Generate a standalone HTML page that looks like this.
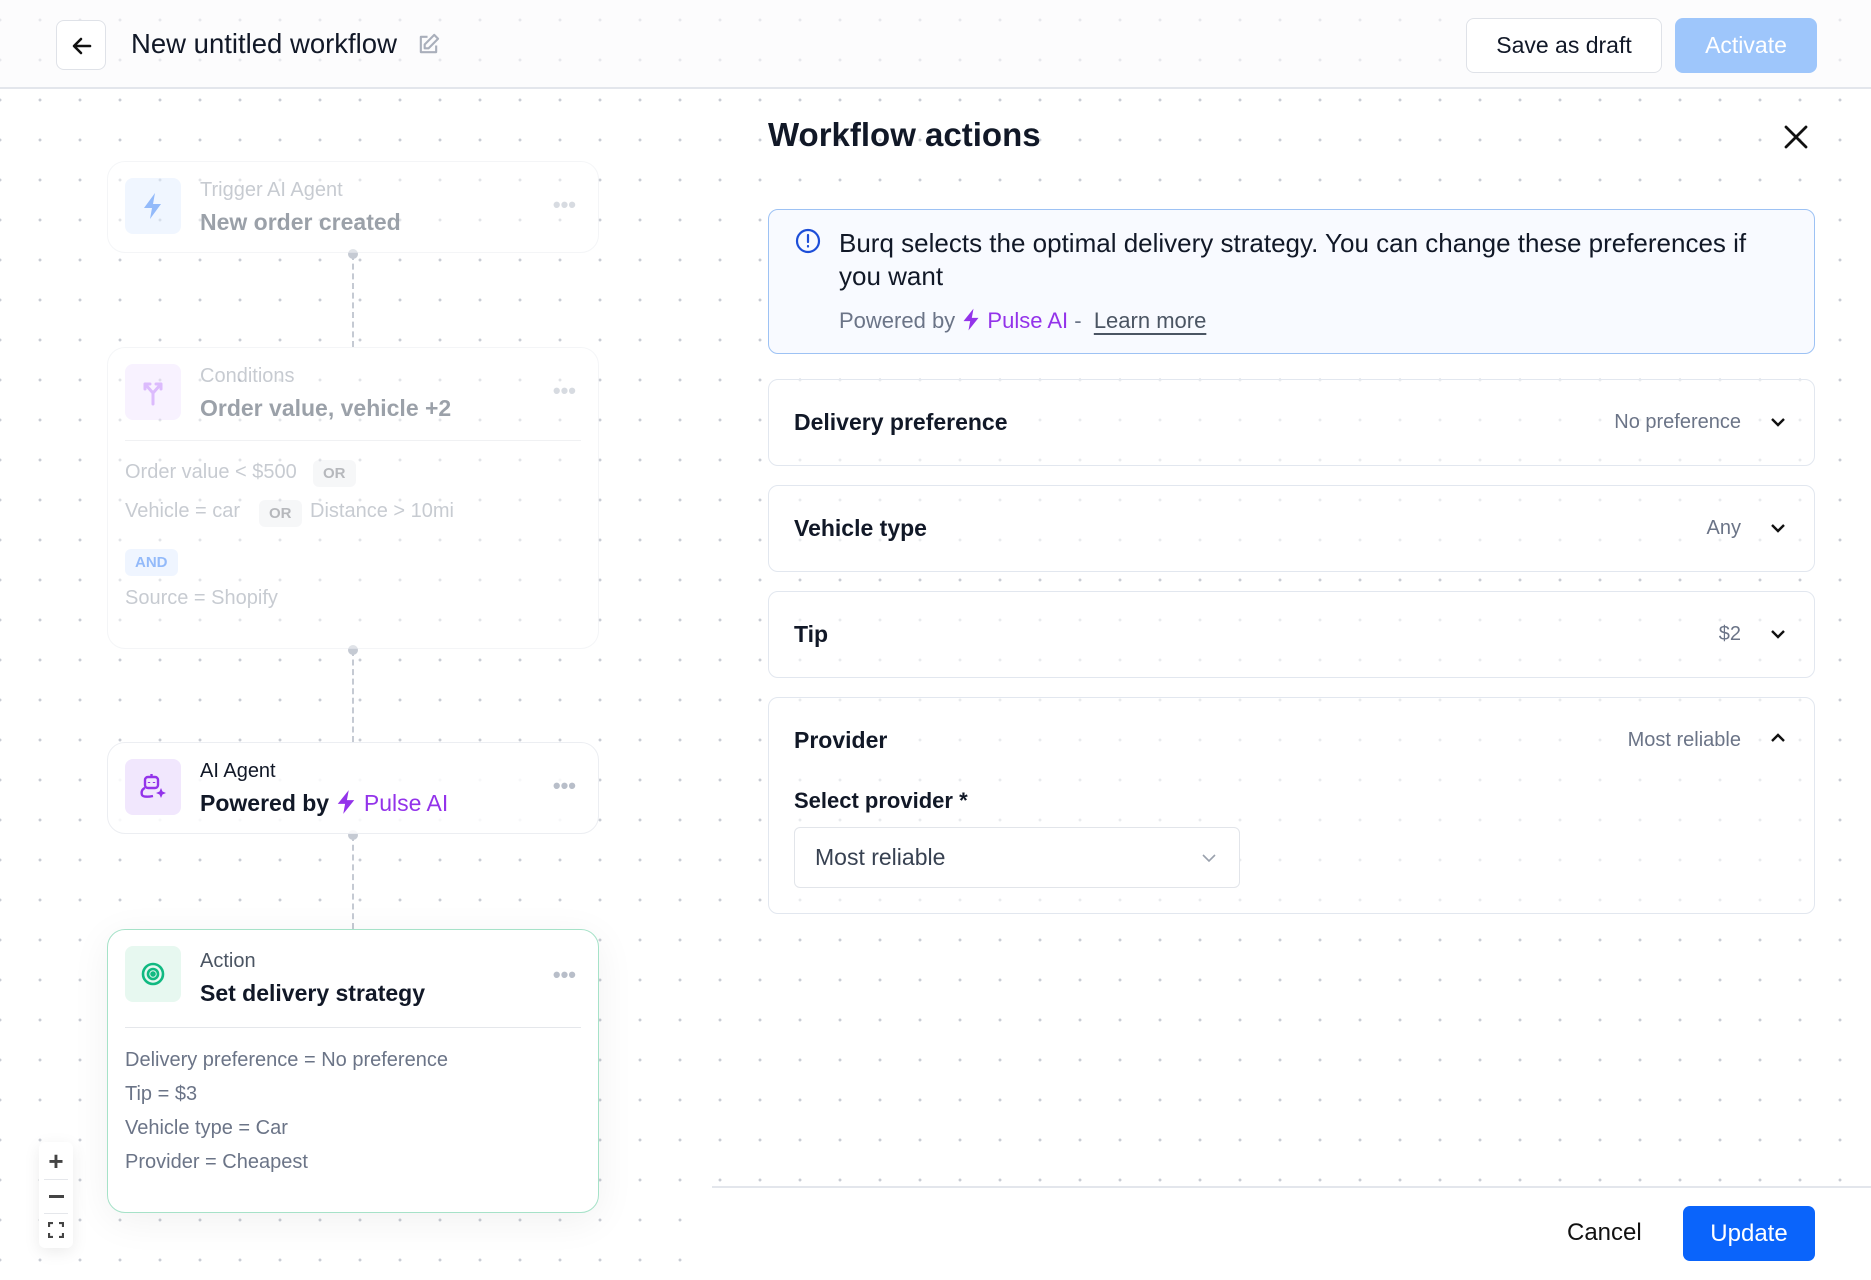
<!DOCTYPE html>
<html><head><meta charset="utf-8"><style>
*{box-sizing:border-box;margin:0;padding:0}
body{width:1871px;height:1280px;position:relative;overflow:hidden;font-family:"Liberation Sans",sans-serif;color:#111827;background:#fff;
background-image:radial-gradient(circle,#c8ccd4 1.3px,transparent 1.6px);background-size:40px 40px;background-position:20px 0px}
.a{position:absolute}
.hdr{left:0;top:0;width:1871px;height:89px;border-bottom:2px solid #e3e6ec;background:rgba(250,250,251,.6)}
.btn{border:1.5px solid #dfe2e8;border-radius:8px;background:#fff}
.card{background:rgba(255,255,255,.85);border:1.5px solid #eceef2;border-radius:18px;left:107px;width:492px}
.ib{left:17px;width:56px;height:56px;border-radius:8px}
.sm{font-size:20px;color:#9aa1ad}
.bd{font-size:23px;font-weight:bold}
.dots{right:22px;color:#b8bec9;font-size:22px;letter-spacing:0px;font-weight:bold}
.line{font-size:20px;color:#6b7487;left:17px}
.conn{left:352px;width:0;border-left:2px dashed #c5cad3}
.row{left:768px;width:1047px;border:1.5px solid #e2e7ef;border-radius:10px;background:rgba(255,255,255,.6)}
.rl{left:25px;font-size:23px;font-weight:bold;color:#111827}
.rv{font-size:20px;color:#6b7487}
.pill{border-radius:6px;font-size:15px;font-weight:bold;padding:5px 10px;background:#f0f1f4;color:#7b7f86}
</style></head><body>
<div class="a hdr"></div>
<div class="a btn" style="left:56px;top:20px;width:50px;height:50px">
<svg class="a" style="left:13px;top:13px" width="24" height="24" viewBox="0 0 24 24" fill="none" stroke="#111" stroke-width="2.6" stroke-linecap="round" stroke-linejoin="round"><path d="M20 12H5M11 5l-7 7 7 7"/></svg></div>
<div class="a" style="left:131px;top:28px;font-size:27.5px">New untitled workflow</div>
<svg class="a" style="left:417px;top:33px" width="23" height="23" viewBox="0 0 24 24" fill="none" stroke="#a9afbb" stroke-width="2.2" stroke-linejoin="round"><path d="M11 4H4v16h16v-7"/><path d="M18 2l4 4-10 10H8v-4z"/></svg>
<div class="a btn" style="left:1466px;top:18px;width:196px;height:55px;font-size:23px;text-align:center;line-height:52px">Save as draft</div>
<div class="a" style="left:1675px;top:18px;width:142px;height:55px;border-radius:8px;background:#9ec6fb;color:#fff;font-size:23px;text-align:center;line-height:55px">Activate</div>

<div class="a conn" style="top:254px;height:93px"></div>
<div class="a conn" style="top:650px;height:92px"></div>
<div class="a conn" style="top:835px;height:94px"></div>
<div class="a" style="left:348px;top:249px;width:10px;height:10px;border-radius:50%;background:#c5cad3"></div>
<div class="a" style="left:348px;top:645px;width:10px;height:10px;border-radius:50%;background:#c5cad3"></div>
<div class="a" style="left:348px;top:830px;width:10px;height:10px;border-radius:50%;background:#c5cad3"></div>

<div class="a card" style="top:161px;height:92px;opacity:.55">
<div class="a ib" style="top:16px;background:#e5efff"><svg class="a" style="left:16px;top:14px" width="24" height="28" viewBox="0 0 24 28"><path d="M14 1L3 16h8l-2 11 11-15h-8z" fill="#3b82f6"/></svg></div>
<div class="a sm" style="left:92px;top:17px">Trigger AI Agent</div>
<div class="a bd" style="left:92px;top:47px;color:#4b5563">New order created</div>
<div class="a dots" style="top:30px">•••</div></div>

<div class="a card" style="top:347px;height:302px;opacity:.55">
<div class="a ib" style="top:16px;background:#f3e8ff"><svg class="a" style="left:16px;top:16px" width="24" height="26" viewBox="0 0 24 26" fill="none" stroke="#c084fc" stroke-width="3" stroke-linecap="round"><path d="M12 24V13L4 4M12 13l8-9M4 4v5M4 4h5M20 4v5M20 4h-5"/></svg></div>
<div class="a sm" style="left:92px;top:17px">Conditions</div>
<div class="a bd" style="left:92px;top:47px;color:#4b5563">Order value, vehicle +2</div>
<div class="a dots" style="top:30px">•••</div>
<div class="a" style="left:17px;top:92px;width:456px;border-top:1.5px solid #e5e7eb"></div>
<div class="a line" style="top:113px;color:#9aa1ad">Order value &lt; $500</div>
<div class="a pill" style="left:205px;top:112px">OR</div>
<div class="a line" style="top:152px;color:#9aa1ad">Vehicle = car</div>
<div class="a pill" style="left:151px;top:152px">OR</div>
<div class="a line" style="left:202px;top:152px;color:#9aa1ad">Distance &gt; 10mi</div>
<div class="a pill" style="left:17px;top:201px;background:#e3eeff;color:#3b82f6">AND</div>
<div class="a line" style="top:239px;color:#9aa1ad">Source = Shopify</div></div>

<div class="a card" style="top:742px;height:92px">
<div class="a ib" style="top:16px;background:#f1e7fd"><svg class="a" style="left:12px;top:12px" width="32" height="32" viewBox="0 0 32 32" fill="none" stroke="#9333ea" stroke-width="2.4" stroke-linejoin="round"><rect x="8" y="6" width="13" height="11" rx="3"/><path d="M14.5 3v3M12 11v1M17 11v1"/><path d="M8 17c-3 1-4 4-3 7 1 2 6 2 11 1"/><path d="M24 17l1.5 3.5L29 22l-3.5 1.5L24 27l-1.5-3.5L19 22l3.5-1.5z" fill="#9333ea" stroke="none"/></svg></div>
<div class="a" style="left:92px;top:17px;font-size:20px;color:#111827">AI Agent</div>
<div class="a bd" style="left:92px;top:46px">Powered by <svg width="22" height="26" viewBox="0 0 24 28" style="vertical-align:-4px"><path d="M15 1L3 16h8l-2 11 12-15h-8z" fill="#9333ea"/></svg> <span style="color:#9333ea;font-weight:normal">Pulse AI</span></div>
<div class="a dots" style="top:30px">•••</div></div>

<div class="a card" style="top:929px;height:284px;border-color:#a6e2c8;background:#fff;box-shadow:0 8px 40px rgba(0,0,0,.06)">
<div class="a ib" style="top:16px;background:#e7f8f0"><svg class="a" style="left:15px;top:15px" width="26" height="26" viewBox="0 0 26 26" fill="none" stroke="#10b981" stroke-width="2.6"><circle cx="13" cy="13" r="10"/><circle cx="13" cy="13" r="5"/><circle cx="13" cy="13" r="1.5" fill="#10b981"/></svg></div>
<div class="a" style="left:92px;top:20px;font-size:20px;color:#4b5563">Action</div>
<div class="a bd" style="left:92px;top:50px">Set delivery strategy</div>
<div class="a dots" style="top:32px">•••</div>
<div class="a" style="left:17px;top:97px;width:456px;border-top:1.5px solid #e5e7eb"></div>
<div class="a line" style="top:119px">Delivery preference = No preference</div>
<div class="a line" style="top:153px">Tip = $3</div>
<div class="a line" style="top:187px">Vehicle type = Car</div>
<div class="a line" style="top:221px">Provider = Cheapest</div></div>

<div class="a" style="left:39px;top:1142px;width:34px;height:106px;background:#fff;border-radius:6px;box-shadow:0 4px 16px rgba(0,0,0,.08)">
<div class="a" style="left:0;top:8px;width:34px;text-align:center;font-size:26px;font-weight:bold;color:#444;line-height:22px">+</div>
<div class="a" style="left:5px;top:37px;width:24px;border-top:1px solid #e5e7eb"></div>
<div class="a" style="left:10px;top:53px;width:15px;height:3px;background:#444"></div>
<div class="a" style="left:5px;top:71px;width:24px;border-top:1px solid #e5e7eb"></div>
<svg class="a" style="left:9px;top:80px" width="16" height="16" viewBox="0 0 16 16" fill="none" stroke="#444" stroke-width="2.2"><path d="M1 5V1h4M11 1h4v4M15 11v4h-4M5 15H1v-4"/></svg></div>

<div class="a" style="left:768px;top:116px;font-size:33px;font-weight:bold;color:#111827">Workflow actions</div>
<svg class="a" style="left:1783px;top:124px" width="26" height="26" viewBox="0 0 26 26" stroke="#111" stroke-width="2.8" stroke-linecap="round"><path d="M3 3l20 20M23 3L3 23"/></svg>

<div class="a" style="left:768px;top:209px;width:1047px;height:145px;border:1.8px solid #9dc2f4;border-radius:10px;background:#f8faff">
<div class="a" style="left:26px;top:18px;width:26px;height:26px"><svg width="26" height="26" viewBox="0 0 26 26" fill="none" stroke="#1d4ed8" stroke-width="2.2" stroke-linecap="round"><circle cx="13" cy="13" r="11"/><path d="M13 7v7M13 18v.5"/></svg></div>
<div class="a" style="left:70px;top:17px;width:945px;font-size:26px;line-height:33px;color:#111827">Burq selects the optimal delivery strategy. You can change these preferences if you want</div>
<div class="a" style="left:70px;top:97px;font-size:22px;color:#6b7487">Powered by <svg width="20" height="25" viewBox="0 0 24 28" style="vertical-align:-4px"><path d="M15 1L3 16h8l-2 11 12-15h-8z" fill="#9333ea"/></svg> <span style="color:#9333ea">Pulse AI</span> - &nbsp;<span style="color:#4b5563;text-decoration:underline;text-underline-offset:5px">Learn more</span></div></div>

<div class="a row" style="top:379px;height:87px"><div class="a rl" style="top:29px">Delivery preference</div><div class="a rv" style="right:73px;top:31px">No preference</div>
<svg class="a" style="right:27px;top:33px" width="18" height="18" viewBox="0 0 18 18" fill="none" stroke="#111" stroke-width="2.4"><path d="M3 6l6 6 6-6"/></svg></div>
<div class="a row" style="top:485px;height:87px"><div class="a rl" style="top:29px">Vehicle type</div><div class="a rv" style="right:73px;top:31px">Any</div>
<svg class="a" style="right:27px;top:33px" width="18" height="18" viewBox="0 0 18 18" fill="none" stroke="#111" stroke-width="2.4"><path d="M3 6l6 6 6-6"/></svg></div>
<div class="a row" style="top:591px;height:87px"><div class="a rl" style="top:29px">Tip</div><div class="a rv" style="right:73px;top:31px">$2</div>
<svg class="a" style="right:27px;top:33px" width="18" height="18" viewBox="0 0 18 18" fill="none" stroke="#111" stroke-width="2.4"><path d="M3 6l6 6 6-6"/></svg></div>
<div class="a row" style="top:697px;height:217px"><div class="a rl" style="top:29px">Provider</div><div class="a rv" style="right:73px;top:31px">Most reliable</div>
<svg class="a" style="right:27px;top:31px" width="18" height="18" viewBox="0 0 18 18" fill="none" stroke="#111" stroke-width="2.4"><path d="M3 12l6-6 6 6"/></svg>
<div class="a" style="left:25px;top:90px;font-size:22px;font-weight:bold">Select provider *</div>
<div class="a" style="left:25px;top:129px;width:446px;height:61px;border:1.5px solid #e2e5ea;border-radius:6px;background:#fff">
<div class="a" style="left:20px;top:16px;font-size:23px;color:#374151">Most reliable</div>
<svg class="a" style="right:22px;top:22px" width="16" height="16" viewBox="0 0 16 16" fill="none" stroke="#9aa1ad" stroke-width="1.6"><path d="M2 5l6 6 6-6"/></svg></div></div>

<div class="a" style="left:712px;top:1186px;width:1159px;height:94px;border-top:2px solid #e3e6ec;background:#fff"></div>
<div class="a" style="left:1567px;top:1219px;font-size:24px;color:#111">Cancel</div>
<div class="a" style="left:1683px;top:1206px;width:132px;height:55px;border-radius:7px;background:#0a64fb;color:#fff;font-size:24px;text-align:center;line-height:55px">Update</div>
</body></html>
